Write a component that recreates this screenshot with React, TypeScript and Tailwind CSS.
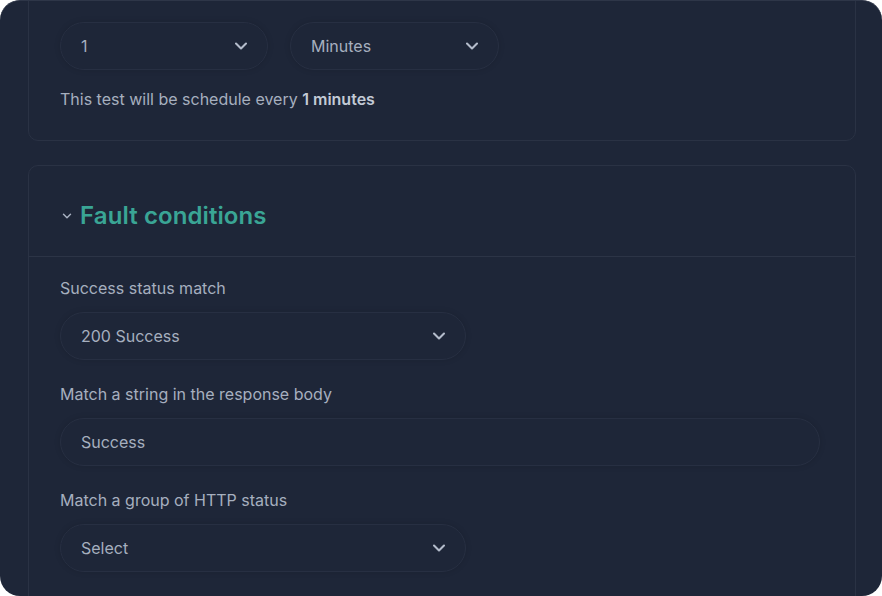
import { ChevronDown } from "lucide-react";

const font = { fontFamily: "Inter, 'Noto Sans', sans-serif" };

const SelectBox = ({ value, width }: { value: string; width: string }) => (
  <div
    className={`flex h-[48px] ${width} items-center justify-between rounded-full border border-[#272f42] bg-[#1e2638] pl-5 pr-[16px] shadow-[0_0_6px_rgba(0,0,0,0.12)]`}
  >
    <span className="text-base text-[#a6afbf]">{value}</span>
    <ChevronDown className="h-5 w-5 text-[#b4bccb]" strokeWidth={2.5} />
  </div>
);

const Field = ({ label, children }: { label: string; children: React.ReactNode }) => (
  <div className="flex flex-col gap-3">
    <span className="text-base leading-6 text-[#a6afbf]">{label}</span>
    {children}
  </div>
);

export default function App() {
  return (
    <div className="h-[596px] w-[882px] bg-white" style={font}>
      <div className="h-full w-full overflow-hidden rounded-[20px] border-t border-[#2e3648] bg-[#1e2638] pl-[28px] pr-[26px]">
        {/* schedule card */}
        <div className="-mt-[31px] rounded-[10px] border border-[#2a3244] px-[31px] pb-[29px] pt-[51px]">
          <div className="flex gap-[22px]">
            <SelectBox value="1" width="w-[208px]" />
            <SelectBox value="Minutes" width="w-[209px]" />
          </div>
          <p className="mt-[17px] text-base leading-6 text-[#a6afbf]">
            This test will be schedule every{" "}
            <span className="font-semibold text-[#c3cad6]">1 minutes</span>
          </p>
        </div>

        {/* fault conditions card */}
        <div className="mt-[24px] rounded-[10px] border border-[#2a3244] pb-[60px]">
          <div className="flex h-[91px] items-center gap-[6px] border-b border-[#2c3446] px-[31px] pt-[10px]">
            <ChevronDown className="h-[14px] w-[14px] text-[#a6afbf]" strokeWidth={2.5} />
            <h2 className="text-[24px] font-semibold tracking-[0.1px] text-[#3aa595]">Fault conditions</h2>
          </div>
          <div className="flex flex-col gap-[22px] px-[31px] pt-[19px]">
            <Field label="Success status match">
              <SelectBox value="200 Success" width="w-[406px]" />
            </Field>
            <Field label="Match a string in the response body">
              <div className="flex h-[48px] w-[760px] items-center rounded-full border border-[#272f42] bg-[#1e2638] pl-5 shadow-[0_0_6px_rgba(0,0,0,0.12)]">
                <span className="text-base text-[#a6afbf]">Success</span>
              </div>
            </Field>
            <Field label="Match a group of HTTP status">
              <SelectBox value="Select" width="w-[406px]" />
            </Field>
          </div>
        </div>
      </div>
    </div>
  );
}
